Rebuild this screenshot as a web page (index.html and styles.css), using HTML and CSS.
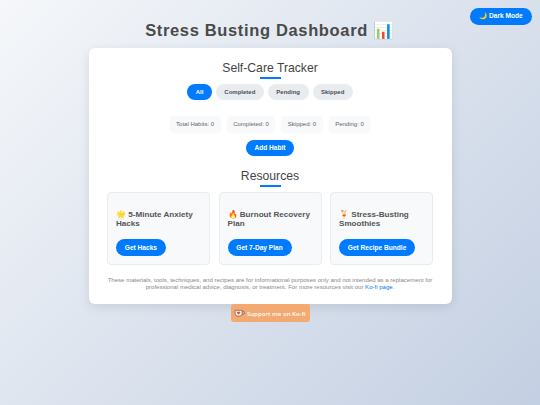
FILE: index.html
```html
<!DOCTYPE html>
<html lang="en">
<head>
<meta charset="utf-8">
<title>Stress Busting Dashboard</title>
<link rel="stylesheet" href="styles.css">
</head>
<body>
<button class="btn theme-toggle">🌙 Dark Mode</button>
<h1 class="page-title">Stress Busting Dashboard 📊</h1>
<main class="panel">
  <h2 class="section-title">Self-Care Tracker</h2>
  <div class="filters">
    <button class="pill active">All</button>
    <button class="pill">Completed</button>
    <button class="pill">Pending</button>
    <button class="pill">Skipped</button>
  </div>
  <div class="stats">
    <div class="stat">Total Habits: 0</div>
    <div class="stat">Completed: 0</div>
    <div class="stat">Skipped: 0</div>
    <div class="stat">Pending: 0</div>
  </div>
  <div class="add-row"><button class="btn">Add Habit</button></div>
  <h2 class="section-title resources-title">Resources</h2>
  <div class="cards">
    <article class="card"><h3>🌟 5-Minute Anxiety Hacks</h3><button class="btn">Get Hacks</button></article>
    <article class="card"><h3>🔥 Burnout Recovery Plan</h3><button class="btn">Get 7-Day Plan</button></article>
    <article class="card"><h3>🍹 Stress-Busting Smoothies</h3><button class="btn">Get Recipe Bundle</button></article>
  </div>
  <p class="disclaimer">These materials, tools, techniques, and recipes are for informational purposes only and not intended as a replacement for professional medical advice, diagnosis, or treatment. For more resources visit our <a href="#">Ko-fi page.</a></p>
</main>
<div class="support-row">
  <a class="kofi" href="#">
    <svg class="cup" viewBox="0 0 12 9" aria-hidden="true">
      <path d="M1 1.5h8v3.5a3 3 0 0 1-3 3H4a3 3 0 0 1-3-3z" fill="#fbeee4" stroke="#7a5a48" stroke-width=".8"/>
      <path d="M9 2.5h1a1.3 1.3 0 0 1 0 3.4H9" fill="none" stroke="#7a5a48" stroke-width=".8"/>
      <path d="M5 6.4 3.3 4.6a1 1 0 0 1 1.7-1.2 1 1 0 0 1 1.7 1.2z" fill="#e5533d"/>
    </svg>
    Support me on Ko-fi
  </a>
</div>
</body>
</html>
```
FILE: styles.css
```css
* { box-sizing: border-box; }
html, body { margin: 0; height: 100%; }
body {
  min-height: 405px;
  padding-top: 19px;
  background: linear-gradient(135deg, #f5f7fa 0%, #c3cfe2 100%);
  font-family: "Liberation Sans", Arial, sans-serif;
  color: #444;
  overflow: hidden;
}
.page-title {
  margin: 0 0 7px;
  height: 22px;
  line-height: 22px;
  text-align: center;
  font-size: 16.5px;
  font-weight: 700;
  letter-spacing: 0.65px;
  color: #4a4a4a;
}
.btn {
  border: 0;
  border-radius: 19px;
  background: #007bff;
  color: #fff;
  font: 700 6.6px "Liberation Sans", Arial, sans-serif;
  padding: 0 8.75px;
  height: 16.5px;
}
.theme-toggle { position: absolute; top: 8px; right: 8px; width: 62px; padding: 0; }
.panel {
  width: 363px;
  height: 256px;
  margin: 0 auto;
  padding: 12px 18.5px 0;
  background: #fff;
  border-radius: 6px;
  box-shadow: 0 3px 11px rgba(0, 0, 0, 0.1);
}
.section-title {
  margin: 0;
  text-align: center;
  font-size: 12.2px;
  font-weight: 400;
  line-height: 16px;
  color: #444;
}
.section-title::after {
  content: "";
  display: block;
  width: 21px;
  height: 1.5px;
  margin: 1px auto 0;
  background: #007bff;
}
.filters { display: flex; justify-content: center; gap: 4px; margin-top: 5.5px; }
.pill {
  height: 16px;
  padding: 0 8.5px;
  border: 0;
  border-radius: 19px;
  background: #e9ecef;
  color: #495057;
  font: 700 6px "Liberation Sans", Arial, sans-serif;
}
.pill.active { background: #007bff; color: #fff; }
.stats { display: flex; justify-content: center; gap: 6px; margin-top: 16px; }
.stat {
  height: 16px;
  padding: 0 6.5px;
  line-height: 16px;
  border-radius: 4px;
  background: #f8f9fa;
  box-shadow: 0 1px 2px rgba(0, 0, 0, 0.03);
  font-size: 6px;
  color: #666;
}
.add-row { display: flex; justify-content: center; margin-top: 7.5px; }
.resources-title { margin-top: 12px; }
.cards { display: grid; grid-template-columns: repeat(3, 1fr); gap: 8.5px; margin-top: 5px; }
.card {
  height: 73.5px;
  padding: 17.5px 8px 0;
  background: #f8f9fa;
  border: 1px solid #e9ecef;
  border-radius: 4px;
}
.card h3 {
  margin: 0 0 6px;
  height: 20px;
  font-size: 8.1px;
  line-height: 9.4px;
  font-weight: 700;
  color: #555;
}
.disclaimer {
  margin: 12px 0 0;
  text-align: center;
  font-size: 6.05px;
  line-height: 7px;
  color: #888;
}
.disclaimer a { color: #007bff; text-decoration: none; }
.support-row { display: flex; justify-content: center; }
.kofi {
  display: flex;
  align-items: center;
  justify-content: center;
  gap: 1.5px;
  width: 79px;
  height: 18px;
  border-radius: 3px;
  background: #f3a96f;
  color: #fff;
  font-family: "Open Sans", sans-serif;
  font-size: 6.1px;
  font-weight: 600;
  text-decoration: none;
}
.cup { width: 11px; height: 8px; }
```
